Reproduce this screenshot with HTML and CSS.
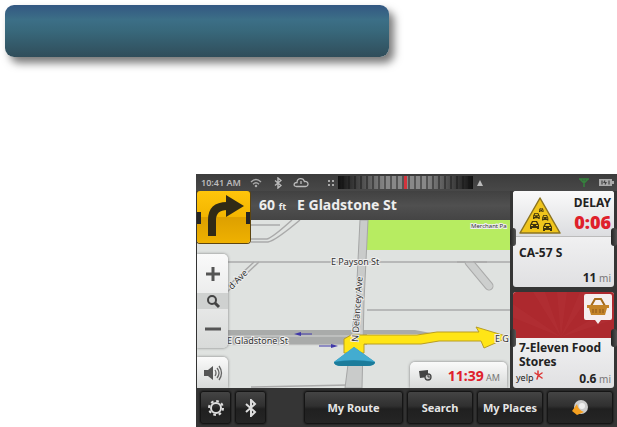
FILE: index.html
```html
<!doctype html>
<html lang="en">
  <head>
    <meta charset="utf-8">
    <title>Navigation</title>
    <link rel="stylesheet" href="styles.css">
  </head>
  <body>
    <div class="banner"></div>

    <main class="device">
      <header class="status">
        <time class="clock">10:41 AM</time>
        <svg class="wifi" width="12" height="10" viewBox="0 0 12 10" fill="none" stroke="#aaa" stroke-width="1.4"><path d="M1 4Q6 -1 11 4M3 6.200Q6 3.500 9 6.200"/><circle cx="6" cy="8" r=".6"/></svg>
        <svg class="status-bt" width="8" height="12" viewBox="0 0 8 12" fill="none" stroke="#bbb" stroke-width="1.4"><path d="M1 3.500L7 8.500 4 11V1L7 3.500 1 8.500"/></svg>
        <svg class="cloud" width="16" height="11" viewBox="0 0 16 11" fill="none" stroke="#bbb" stroke-width="1.3"><path d="M3.500 9.500C0 9.500 .5 5.500 4 5.500 4 1 10 0 11.500 4.500 16 4 16 9.500 12.500 9.500ZM8 4V7"/></svg>
        <svg class="grip" width="8" height="8" viewBox="0 0 8 8" fill="#aaa"><path d="M1 1h2v2H1zM5 1h2v2H5zM1 5h2v2H1zM5 5h2v2H5z"/></svg>
        <div class="compass"></div>
        <svg class="north" width="6" height="6" viewBox="0 0 6 6"><path d="M3 0L6 6H0z" fill="#bbb"/></svg>
        <svg class="signal" width="10" height="10" viewBox="0 0 10 10" fill="none" stroke="#35803d" stroke-width="1.600"><path d="M0 1H10M1 1L5 5 9 1M5 1V9"/></svg>
        <svg width="16" height="9" viewBox="0 0 16 9"><path d="M1 1H14V3H16V6H14V8H1Z" fill="#aaa"/><path d="M4 2.500V6.500M7 2.500L6 4.500H8L7 6.500M11 2.500V6.500" stroke="#444" fill="none" stroke-width="1.200"/></svg>
      </header>

      <section class="map">
        <svg class="map-canvas" viewBox="0 0 314 197" preserveAspectRatio="xMinYMin slice">
          <rect width="314" height="197" fill="#dfe2e0"/>
          <path d="M170 29H314V59H170z" fill="#b7ec61"/>
          <g fill="none" stroke="#aaa" stroke-width="1.500">
            <path d="M54 34H83M54 48H70Q75 47 95 29M54 51H71Q78 50 103 29"/>
            <path d="M28 71H314M170 119H314M54 196L152 194"/>
            <path d="M57 71L30 96M62 71L30 101"/>
          </g>
          <path d="M272 71L292 95" stroke="#aaa" stroke-width="9" stroke-linecap="round"/>
          <path d="M272 71L292 95" stroke="#cdcfce" stroke-width="7" stroke-linecap="round"/>
          <path d="M262 60H284V70H262z" fill="#dfe2e0"/>
          <path d="M260 71H290" stroke="#aaa" stroke-width="1.500"/>
          <path d="M30 139H218L239 143H170V154H30z" fill="#a9abaa"/>
          <path d="M30 145H240M30 154H150" stroke="#d2d3d2"/>
          <path d="M163 29L159 110 148 197H165L167 110 171 29z" fill="#c9cbca" stroke="#a5a6a6"/>
          <path d="M147 155V148L154 144H220L240 141H282L279 136 312 146 287 157 284 150H242L224 153H167V162H147z" fill="#ffe516" stroke="#b99d22"/>
          <g stroke="#4038a8" fill="#4038a8"><path d="M101 143H115M122 155H137"/><path d="M97 143l7-2v4zM141 155l-7-2v4z" stroke="none"/></g>
          <g class="street">
            <text x="134" y="74">E Payson St</text>
            <text x="30" y="153">E Gladstone St</text>
            <text x="298" y="151">E G</text>
            <text transform="translate(161 151) rotate(-86)">N Delancey Ave</text>
            <text transform="translate(35 99) rotate(-46)">d Ave</text>
            <text class="park" x="274" y="37">Merchant Pa</text>
          </g>
          <path d="M157 156L178 171Q178 175 169 175H145Q137 175 137 171z" fill="#258fb6"/>
          <path d="M157 156L178 171Q156 167 137 171z" fill="#43acd0"/>
          <path d="M137 171Q156 168 178 171Q178 175 169 175H145Q137 175 137 171z" fill="#1c7c9b"/>
        </svg>

        <div class="next-road"><span>60 <small>ft</small></span><span>E Gladstone St</span></div>
        <div class="turn">
          <svg width="53" height="52" viewBox="0 0 53 52"><path d="M15 45V29Q15 15 30 15" fill="none" stroke="#302a16" stroke-width="8"/><path d="M29 4L47 15 29 26z" fill="#302a16"/><path d="M0 21h4v12H0zM49 21h4v12h-4z" fill="#252525"/></svg>
        </div>

        <div class="zoom">
          <button aria-label="Zoom in"><svg width="16" height="16" viewBox="0 0 16 16"><path d="M8 1V15M1 8H15" stroke="#555" stroke-width="3"/></svg></button>
          <button class="find" aria-label="Find"><svg width="16" height="16" viewBox="0 0 16 16" fill="none" stroke="#444"><circle cx="7" cy="7" r="4" stroke-width="2"/><path d="M10 10L14 14" stroke-width="3"/></svg></button>
          <button aria-label="Zoom out"><svg width="16" height="16" viewBox="0 0 16 16"><path d="M0 8H16" stroke="#555" stroke-width="3"/></svg></button>
        </div>
        <button class="sound" aria-label="Sound"><svg width="20" height="18" viewBox="0 0 20 18"><path d="M1 6H5L10 2V16L5 12H1z" fill="#555"/><path d="M12 6Q14 9 12 12M14 4Q18 9 14 14M16 2Q21 9 16 16" fill="none" stroke="#666" stroke-width="1.300"/></svg></button>

        <div class="eta">
          <svg width="14" height="12" viewBox="0 0 14 12"><path d="M1 2L10 1V8L2 9z" fill="#444"/><circle cx="10" cy="8" r="3" fill="#ccc" stroke="#444" stroke-width="1.300"/><path d="M10 6V8H12" fill="none" stroke="#444"/></svg>
          <span><b>11:39</b> AM</span>
        </div>
      </section>

      <aside class="side">
        <article class="card traffic">
          <div class="card-top">
            <svg width="44" height="40" viewBox="0 0 44 40">
              <path d="M22 2L42 37H2z" fill="#f0c51c" stroke="#8c7420" stroke-linejoin="round" stroke-width="1.500"/>
              <defs>
                <path id="car" d="M0 4l2-4h5l2 4v4H7V7H2v1H0zM2 3h5L6 1H3zM1 4v1h2V4zM6 4v1h2V4z" fill-rule="evenodd"/>
              </defs>
              <g fill="#40350d">
                <use href="#car" x="12" y="25"/>
                <use href="#car" x="25" y="27"/>
                <use href="#car" transform="translate(15 17) scale(.75)"/>
                <use href="#car" transform="translate(24 19) scale(.7)"/>
                <use href="#car" transform="translate(21 12) scale(.5)"/>
              </g>
            </svg>
            <div class="delay">DELAY<strong>0:06</strong></div>
          </div>
          <div class="card-body"><h2>CA-57 S</h2><p class="distance"><b>11</b> mi</p></div>
          <i class="clip"></i>
        </article>

        <article class="card place">
          <div class="card-top">
            <svg class="rays" viewBox="0 0 101 45" preserveAspectRatio="none"><path d="M48 44L0 12V25zM48 44L20 0H32zM48 44L44 0H54zM48 44L67 0H79zM48 44L101 14V27z" fill="#bd3d3e" opacity=".25"/></svg>
            <svg class="basket" width="28" height="31" viewBox="0 0 28 31"><path d="M2 0H26Q28 0 28 2V24Q28 26 26 26H17L14 30 11 26H2Q0 26 0 24V2Q0 0 2 0z" fill="#f5eeee"/><path d="M7 12L11 5H17L21 12" fill="none" stroke="#a56b1c" stroke-width="2"/><path d="M3 11H25V14H23L21 21H7L5 14H3z" fill="#c38328"/><path d="M9 15V19M12 15V19M16 15V19M19 15V19" stroke="#8d5717"/></svg>
          </div>
          <div class="card-body">
            <h2>7-Eleven Food Stores</h2>
            <div class="place-foot">
              <span class="yelp">yelp<svg width="9" height="10" viewBox="0 0 9 10"><path d="M4 5V1M4 5L1 3M5 5L8 3M5 6L8 8M4 6L3 9" stroke="#d33" stroke-width="1.500" stroke-linecap="round"/></svg></span>
              <p class="distance"><b>0.6</b> mi</p>
            </div>
          </div>
          <i class="clip"></i>
        </article>
      </aside>

      <nav class="toolbar">
        <button aria-label="Settings"><svg width="18" height="18" viewBox="0 0 18 18" fill="none" stroke="#ddd"><circle cx="9" cy="9" r="5" stroke-width="2"/><circle cx="9" cy="9" r="7" stroke-width="2" stroke-dasharray="2.700 2.800"/></svg></button>
        <button aria-label="Bluetooth"><svg width="14" height="18" viewBox="0 0 14 18"><path d="M2 5L11 13 7 17V1L11 5 2 13" fill="none" stroke="#ddd" stroke-width="2"/></svg></button>
        <button class="route">My Route</button>
        <button>Search</button>
        <button>My Places</button>
        <button aria-label="Assistant"><svg width="18" height="18" viewBox="0 0 18 18"><circle cx="10" cy="8" r="7" fill="#ccc"/><circle cx="11" cy="7" r="3" fill="#eee"/><path d="M1 12L6 5Q7 11 13 13L6 16z" fill="#f5a020"/></svg></button>
      </nav>
    </main>
  </body>
</html>
```
FILE: styles.css
```css
* { box-sizing: border-box; }

body {
  margin: 0;
  background: #fff;
  font-family: 'Noto Sans', 'Open Sans', sans-serif;
  overflow: hidden;
}

svg { display: block; flex: none; }
h2, p { margin: 0; }
button {
  display: flex;
  align-items: center;
  justify-content: center;
  padding: 0;
  border: 0;
  background: none;
  font-family: inherit;
}

.banner {
  width: 384px;
  max-width: 100%;
  height: 52px;
  margin: 5px 5px 117px;
  border-radius: 9px;
  background: linear-gradient(#335782, #3c6f87 28%, #38687b 50%, #304d5a);
  box-shadow: 5px 6px 8px #0008;
}

.device {
  display: grid;
  grid-template-columns: 1fr 107px;
  grid-template-rows: 17px 197px 39px;
  margin-left: 196px;
  background: #353535;
  color: #222;
}

.status {
  grid-column: 1 / -1;
  display: flex;
  align-items: center;
  padding: 0 3px 0 5px;
  background: linear-gradient(#3c3c3c, #484848);
}
.clock {
  width: 49px;
  color: #bbb;
  font-size: 9px;
  font-weight: 600;
  white-space: nowrap;
}
.status-bt { margin-left: 12px; }
.cloud { margin-left: 11px; }
.grip { margin-left: 18px; }
.compass {
  width: 135px;
  height: 13px;
  margin: 0 4px 0 3px;
  background:
    linear-gradient(90deg, #111, #1110 35%, #1110 65%, #111),
    linear-gradient(90deg, #0000 66px, #d3343d 66px 69px, #0000 69px),
    repeating-linear-gradient(90deg, #888 0 4px, #555 4px 6px);
}
.signal { margin: 0 9px 0 auto; }

.map {
  position: relative;
  overflow: hidden;
  border-left: 1px solid #333;
}
.map-canvas {
  position: absolute;
  width: 100%;
  height: 100%;
}
.street {
  fill: #333;
  stroke: #eee;
  stroke-width: 2px;
  paint-order: stroke;
  font-size: 9px;
}
.park { font-size: 6px; }

.next-road {
  position: relative;
  display: flex;
  gap: 11px;
  height: 29px;
  padding-left: 62px;
  background: linear-gradient(#414141, #505050 50%, #444);
  color: #eee;
  font-size: 14px;
  font-weight: 700;
  line-height: 27px;
  white-space: nowrap;
}
.next-road small { font-size: 9px; }
.turn {
  position: absolute;
  top: 0;
  left: 0;
  border-radius: 3px;
  background: linear-gradient(#ffc50b, #f3b500 50%, #dda000 51%, #efb100);
  box-shadow: 0 0 0 1px #5d4510;
}

.zoom, .sound, .eta {
  position: absolute;
  background: linear-gradient(#fafafa, #d8dad9);
  box-shadow: 0 0 3px #777;
}
.zoom {
  top: 63px;
  left: 0;
  width: 31px;
  border-radius: 0 5px 5px 0;
}
.zoom button { width: 100%; height: 39px; }
.zoom .find { height: 16px; background: #cfd1d0; }
.sound {
  bottom: 0;
  left: 0;
  width: 31px;
  height: 31px;
  border-radius: 0 5px 0 0;
}
.eta {
  right: 3px;
  bottom: 0;
  display: flex;
  align-items: center;
  justify-content: space-between;
  width: 97px;
  height: 26px;
  padding: 0 7px 0 8px;
  border-radius: 5px 5px 0 0;
  color: #777;
  font-size: 9px;
  white-space: nowrap;
}
.eta b { color: #df202b; font-size: 14px; }

.side {
  display: flex;
  flex-direction: column;
  gap: 5px;
  padding: 0 3px;
}
.card {
  position: relative;
  flex: 1;
  display: flex;
  flex-direction: column;
  border-radius: 3px;
  background: linear-gradient(#fff, #e0e0e2);
}
.card-top { position: relative; display: flex; height: 46px; }
.traffic .card-top {
  justify-content: space-between;
  padding: 5px 3px 0 5px;
  border-radius: 3px 3px 0 0;
  border-bottom: 1px solid #bbb;
  background: linear-gradient(#fafafa, #dcdde0);
}
.delay {
  font-size: 12px;
  font-weight: 700;
  line-height: 14px;
  text-align: right;
}
.delay strong {
  display: block;
  color: #df202b;
  font-size: 18px;
  line-height: 24px;
}
.card-body {
  flex: 1;
  display: flex;
  flex-direction: column;
  justify-content: space-between;
  padding: 0 3px 0 6px;
}
.card h2 { font-size: 12px; line-height: 14px; }
.traffic h2 { padding-top: 9px; }
.distance {
  color: #777;
  font-size: 10px;
  line-height: 18px;
  text-align: right;
}
.distance b { color: #222; font-size: 12px; }
.place .card-top {
  overflow: hidden;
  border-radius: 3px 3px 0 0;
  background: #ad292e;
}
.place .card-body { padding-top: 3px; }
.rays { width: 100%; height: 100%; }
.basket { position: absolute; top: 2px; right: 2px; }
.place-foot { display: flex; justify-content: space-between; }
.yelp {
  display: flex;
  margin-left: -3px;
  font-size: 9px;
  line-height: 16px;
}
.clip::before, .clip::after {
  content: '';
  position: absolute;
  top: 37px;
  width: 6px;
  height: 18px;
  border-radius: 3px;
  background: linear-gradient(90deg, #222, #555);
}
.clip::before { left: -3px; }
.clip::after { right: -3px; }

.toolbar {
  grid-column: 1 / -1;
  display: grid;
  grid-template-columns: 31px 31px 1fr 66px 66px 66px;
  gap: 4px;
  padding: 3px 4px;
  background: #353535;
}
.toolbar button {
  border: 1px solid #151515;
  border-radius: 3px;
  background: linear-gradient(#444, #303030 45%, #202020 55%, #252525);
  box-shadow: 0 0 2px #000;
  color: #e5e5e5;
  font-size: 11px;
  font-weight: 700;
  white-space: nowrap;
}
.toolbar .route { margin-left: 34px; }
```
